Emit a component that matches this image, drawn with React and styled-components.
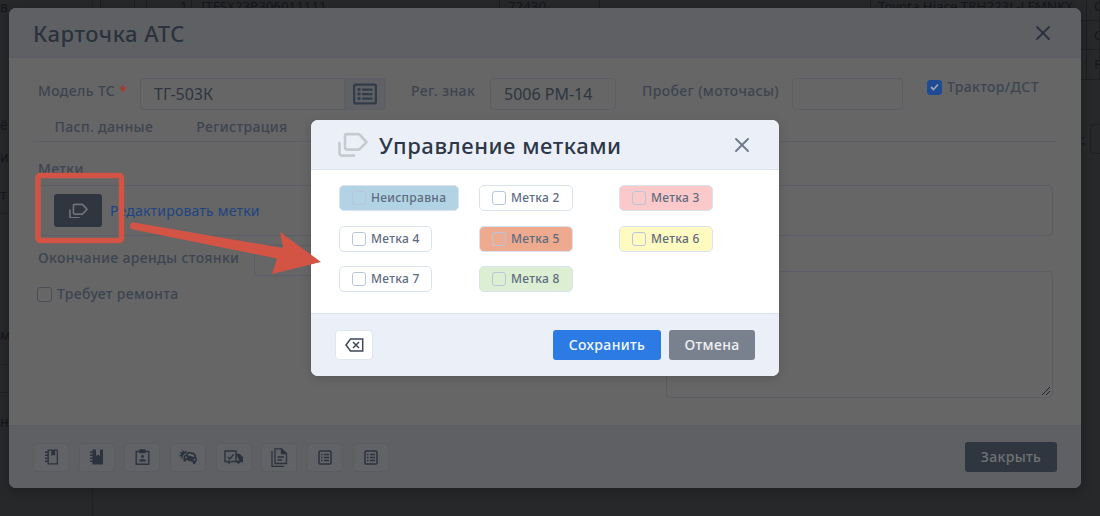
import React from 'react';
import styled, { createGlobalStyle } from 'styled-components';
import { FaCarCrash, FaRegListAlt } from 'react-icons/fa';

const GlobalStyle = createGlobalStyle`
  html, body { margin: 0; padding: 0; height: 100%; }
  body { background: #27282a; font-family: "Noto Sans", "Open Sans", sans-serif; overflow: hidden; }
  * { box-sizing: border-box; }
`;

const Page = styled.div`
  position: relative;
  width: 1100px;
  height: 516px;
  overflow: hidden;
  background: #27282a;
  display: flex;
`;

/* --- dimmed page behind the dialogs --- */
const Sidebar = styled.div`
  width: 93px;
  border-right: 1px solid #202123;
  display: flex;
  flex-direction: column;
  flex-shrink: 0;
`;

const SideRow = styled.div`
  height: ${p => p.$h}px;
  display: flex;
  align-items: center;
  color: #14161a;
  font-size: 14px;
  border-bottom: ${p => (p.$line ? '1px solid #202123' : 'none')};
`;

const Main = styled.div`
  flex: 1;
  min-width: 0;
`;

const TableRow = styled.div`
  display: grid;
  grid-template-columns: 8px 34px 12px 45px 308px 100px 271px 216px 1fr;
  height: ${p => p.$h}px;
  margin-top: ${p => p.$top || 0}px;
  border-bottom: 1px solid #1d1e20;
`;

const Cell = styled.div`
  border-right: 1px solid #1d1e20;
  padding-left: ${p => p.$pad || 0}px;
  color: #15161a;
  font-size: 13.3px;
  line-height: 29px;
  white-space: nowrap;
  overflow: hidden;
  text-align: ${p => p.$align || 'left'};
`;

const Pager = styled.div`
  display: flex;
  justify-content: flex-end;
  align-items: center;
  height: 76px;
  padding-top: 42px;
  color: #15161a;
  font-size: 14px;
`;

const PagerBox = styled.div`
  width: 30px;
  height: 30px;
  margin-left: 5px;
  margin-right: -20px;
  border: 1px solid #1f2022;
  border-radius: 4px;
`;

/* --- vehicle card --- */
const DialogLayer = styled.div`
  position: absolute;
  inset: 0;
  padding: 8px 19px 28px 9px;
  display: flex;
`;

const Dialog = styled.div`
  flex: 1;
  display: flex;
  flex-direction: column;
  background: #666666;
  border-radius: 7px;
  overflow: hidden;
  box-shadow: 0 3px 12px rgba(0, 0, 0, 0.25);
`;

const DialogHeader = styled.div`
  height: 50px;
  padding: 0 30px 0 24px;
  flex-shrink: 0;
  display: flex;
  align-items: center;
  justify-content: space-between;
  background: #5f6064;
  border-bottom: 1px solid #5b5d66;
  color: #2b323d;
`;

const DialogTitle = styled.div`
  font-size: 22px;
  font-weight: 500;
  letter-spacing: 0.025em;
  line-height: 50px;
`;

const DialogBody = styled.div`
  flex: 1;
  padding: 20px 24px 0;
`;

const FormRow = styled.div`
  display: flex;
  align-items: flex-start;
  padding-left: 5px;
`;

const FieldLabel = styled.div`
  width: ${p => p.$w}px;
  margin-left: ${p => p.$ml || 0}px;
  font-size: 14px;
  font-weight: 500;
  letter-spacing: 0.025em;
  line-height: 26px;
  color: #3d4450;
  white-space: nowrap;
  flex-shrink: 0;
`;

const Required = styled.span`
  color: #a8372d;
`;

const InputBox = styled.div`
  width: ${p => p.$w}px;
  height: ${p => p.$h || 32}px;
  margin-left: ${p => p.$ml || 0}px;
  padding-left: 13px;
  border: 1px solid #5b5d67;
  border-radius: ${p => (p.$attached ? '4px 0 0 4px' : '4px')};
  font-size: 16px;
  line-height: 31px;
  color: #2e3540;
  flex-shrink: 0;
`;

const Addon = styled.div`
  width: 41px;
  height: 32px;
  display: flex;
  align-items: center;
  justify-content: center;
  background: #5f6165;
  border: 1px solid #5b5d67;
  border-left: none;
  border-radius: 0 4px 4px 0;
  color: #333c49;
  font-size: 24px;
`;

const CheckWrap = styled.label`
  display: flex;
  align-items: center;
  gap: 5px;
  margin-left: ${p => p.$ml || 0}px;
  margin-top: ${p => p.$mt || 0}px;
  font-size: 14px;
  font-weight: 500;
  letter-spacing: 0.025em;
  line-height: 16px;
  color: #3d4450;
`;

const DimCheck = styled.span`
  width: 15px;
  height: 15px;
  border-radius: 3px;
  display: flex;
  align-items: center;
  justify-content: center;
  border: 1px solid ${p => (p.$on ? '#1f4b94' : '#4a4d55')};
  background: ${p => (p.$on ? '#1f4b94' : 'transparent')};
  flex-shrink: 0;
`;

const Tabs = styled.div`
  display: flex;
  height: 33px;
  margin-top: -1px;
  border-bottom: 1px solid #5b5d67;
`;

const Tab = styled.div`
  padding: 0 21.5px;
  font-size: 14px;
  font-weight: 500;
  letter-spacing: 0.025em;
  line-height: 36px;
  color: #3d4450;
`;

const SectionLabel = styled.div`
  margin: 19px 0 8px 5px;
  font-size: 14px;
  font-weight: 500;
  letter-spacing: 0.025em;
  line-height: 16px;
  color: #3d4450;
`;

const TagBox = styled.div`
  height: 51px;
  margin: 0 4px 0 5px;
  padding-left: 15px;
  display: flex;
  align-items: center;
  gap: 8px;
  border: 1px solid #5b5d65;
  border-radius: 5px;
`;

const TagButton = styled.div`
  width: 48px;
  height: 33px;
  display: flex;
  align-items: center;
  justify-content: center;
  background: #2f3640;
  border-radius: 3px;
  color: #6f7276;
`;

const TagLink = styled.span`
  font-size: 14px;
  letter-spacing: 0.014em;
  line-height: 16px;
  color: #1f4480;
`;

const Lower = styled.div`
  display: flex;
  justify-content: space-between;
  margin: 0 4px 0 5px;
`;

const LowerLeft = styled.div`
  padding-top: 9px;
`;

const DateRow = styled.div`
  display: flex;
`;

const DateLabel = styled.div`
  width: 216px;
  font-size: 14px;
  font-weight: 500;
  letter-spacing: 0.025em;
  line-height: 26px;
  color: #3d4450;
  white-space: nowrap;
`;

const TextArea = styled.div`
  position: relative;
  width: 387px;
  height: 127px;
  margin-top: 35px;
  border: 1px solid #5b5d65;
  border-radius: 4px;
`;

const Resizer = styled.svg`
  position: absolute;
  right: 1px;
  bottom: 1px;
`;

const DialogFooter = styled.div`
  height: 63px;
  flex-shrink: 0;
  padding: 0 24px;
  display: flex;
  align-items: center;
  justify-content: space-between;
  background: #5f6064;
  border-top: 1px solid #5c5e62;
`;

const IconBar = styled.div`
  display: flex;
  gap: 9.7px;
`;

const IconButton = styled.div`
  width: 36px;
  height: 29px;
  display: flex;
  align-items: center;
  justify-content: center;
  background: #626367;
  border: 1px solid #5a5c60;
  border-radius: 4px;
  color: #2c333e;
  font-size: 18px;
`;

const CloseButton = styled.div`
  width: 92px;
  height: 30px;
  text-align: center;
  background: #2f3640;
  border-radius: 3px;
  font-size: 14px;
  font-weight: 500;
  letter-spacing: 0.025em;
  line-height: 30px;
  color: #6f7377;
`;

/* --- labels modal --- */
const ModalLayer = styled.div`
  position: absolute;
  inset: 0;
  padding: 0 10px 20px 0;
  display: flex;
  align-items: center;
  justify-content: center;
`;

const Modal = styled.div`
  width: 468px;
  height: 256px;
  display: flex;
  flex-direction: column;
  background: #fff;
  border-radius: 7px;
  overflow: hidden;
  box-shadow: 0 2px 10px rgba(0, 0, 0, 0.15);
`;

const ModalHeader = styled.div`
  height: 50px;
  padding: 0 29px 0 27px;
  display: flex;
  align-items: center;
  background: #ebf0f8;
  border-bottom: 1px solid #dbe4ef;
  color: #2d3748;
`;

const HeaderIcon = styled.span`
  display: flex;
  color: #c6c9cf;
`;

const ModalTitle = styled.div`
  flex: 1;
  margin-left: 11px;
  font-size: 22px;
  font-weight: 500;
  letter-spacing: 0.025em;
  line-height: 50px;
`;

const TagGrid = styled.div`
  flex: 1;
  padding: 15px 0 0 28px;
  display: grid;
  grid-template-columns: repeat(3, 140px);
  grid-auto-rows: 26px;
  row-gap: 14.5px;
  justify-items: start;
`;

const Chip = styled.div`
  height: 26px;
  padding-left: 12px;
  width: ${p => p.$w}px;
  display: flex;
  align-items: center;
  gap: 5px;
  background: ${p => p.$bg || '#fff'};
  border: 1px solid #d9e2ef;
  border-radius: 5px;
  font-size: 12px;
  font-weight: 500;
  letter-spacing: 0.025em;
  line-height: 24px;
  color: #5f6b7e;
  white-space: nowrap;
`;

const ChipCheck = styled.span`
  width: 14px;
  height: 14px;
  border: 1px solid #b8c6db;
  border-radius: 3px;
  flex-shrink: 0;
`;

const ModalFooter = styled.div`
  height: 63px;
  padding: 0 24px;
  display: flex;
  align-items: center;
  gap: 8px;
  background: #ebf0f8;
  border-top: 1px solid #d8e1ec;
`;

const EraseButton = styled.div`
  width: 38px;
  height: 30px;
  margin-right: auto;
  display: flex;
  align-items: center;
  justify-content: center;
  background: #fff;
  border: 1px solid #dfe6f0;
  border-radius: 4px;
  color: #3d4756;
`;

const ActionButton = styled.div`
  width: ${p => p.$w}px;
  height: 30px;
  text-align: center;
  background: ${p => p.$bg};
  border-radius: 3px;
  font-size: 14px;
  font-weight: 500;
  letter-spacing: 0.025em;
  line-height: 30px;
  color: ${p => p.$fg};
`;

const ModalClose = styled.div`
  display: flex;
  color: #6f7a8c;
`;

const Annotation = styled.svg`
  position: absolute;
  left: 0;
  top: 0;
  pointer-events: none;
`;

const CrossIcon = () => (
  <svg width="16" height="16" viewBox="0 0 16 16" fill="none" stroke="currentColor" strokeWidth="1.9" strokeLinecap="round">
    <path d="M2 2l12 12M14 2L2 14" />
  </svg>
);

const TagsIcon = ({ size = 30 }) => (
  <svg width={size} height={size * 0.84} viewBox="0 0 30 25" fill="none" stroke="currentColor" strokeWidth="2.6" strokeLinejoin="round" strokeLinecap="round">
    <path d="M9 2h11.500a1.500 1.500 0 0 1 1.100.5L28.500 10l-6.900 7a1.500 1.500 0 0 1-1.100.5H9a2 2 0 0 1-2-2V4a2 2 0 0 1 2-2z" />
    <path d="M1.500 11v10a2.500 2.500 0 0 0 2.500 2.500H16" />
  </svg>
);

const NotebookIcon = () => (
  <svg width="15" height="16" viewBox="0 0 15 16" fill="currentColor">
    <path d="M3.500.500H14v15H3.500zM4.800 1.800v12.400h7.900V1.800h-1.600v5.200L9.200 5.700 7.300 7V1.800z" fillRule="evenodd" />
    <path d="M1 2.500h3.500V4H1zM1 5.500h3.500V7H1zM1 8.500h3.500V10H1zM1 11.500h3.500V13H1z" />
  </svg>
);

const NotebookSolidIcon = () => (
  <svg width="15" height="16" viewBox="0 0 15 16" fill="currentColor">
    <path d="M3.500.500H7v6.500l2-1.500 2 1.500V.500h3v15H3.500z" />
    <path d="M1 2.500h3.500V4H1zM1 5.500h3.500V7H1zM1 8.500h3.500V10H1zM1 11.500h3.500V13H1z" />
  </svg>
);

const ClipboardUserIcon = () => (
  <svg width="15" height="16" viewBox="0 0 15 16" fill="none" stroke="currentColor" strokeWidth="1.400">
    <path d="M4.500 2.500H1.200v12.800h12.600V2.500h-3.300" />
    <path d="M5 1h5v2.600H5z" fill="currentColor" />
    <circle cx="7.500" cy="7.500" r="1.400" fill="currentColor" stroke="none" />
    <path d="M4 12.500c.4-1.700 1.700-2.400 3.500-2.400s3.100.7 3.500 2.400z" fill="currentColor" stroke="none" />
  </svg>
);

const TruckCheckIcon = () => (
  <svg width="19" height="15" viewBox="0 0 19 15" fill="none" stroke="currentColor" strokeWidth="1.400">
    <path d="M3 11.500H1V1h11v10.500H7" />
    <path d="M12 4.500h3.500l2.800 3v4H16" fill="currentColor" />
    <path d="M12 11.500h1" />
    <path d="M3.800 7l2 2L9.500 4.500" strokeWidth="1.500" />
    <circle cx="5" cy="12" r="1.700" fill="currentColor" stroke="none" />
    <circle cx="14.500" cy="12" r="1.700" fill="currentColor" stroke="none" />
  </svg>
);

const FilesIcon = () => (
  <svg width="17" height="19" viewBox="0 0 17 19" fill="none" stroke="currentColor" strokeWidth="1.300">
    <path d="M1 3v15.300h12" />
    <path d="M4 .800h6.500L15.500 5.500v10H4z" />
    <path d="M10.500.800v4.700h5" fill="currentColor" />
    <path d="M6.500 9h6.500M6.500 12h4.500" />
  </svg>
);

const ListIcon = () => (
  <svg width="14" height="15" viewBox="0 0 14 15" fill="none" stroke="currentColor" strokeWidth="1.500">
    <rect x="1" y="1" width="12" height="13" rx="1" />
    <path d="M3 4.500h1.500M3 7.500h1.500M3 10.500h1.500M6 4.500h5M6 7.500h5M6 10.500h5" strokeWidth="1.300" />
  </svg>
);

const BackspaceIcon = () => (
  <svg width="19" height="14" viewBox="0 0 19 14" fill="none" stroke="currentColor" strokeWidth="1.500">
    <path d="M17.700 1H5.500L1 7l4.500 6h12.200z" />
    <path d="M8 4l6 6M14 4l-6 6" />
  </svg>
);

const chips = [
  { name: 'Неисправна', w: 120, bg: '#b2d3e4' },
  { name: 'Метка 2', w: 94 },
  { name: 'Метка 3', w: 94, bg: '#fbc9c9' },
  { name: 'Метка 4', w: 93 },
  { name: 'Метка 5', w: 94, bg: '#eeaa8e' },
  { name: 'Метка 6', w: 94, bg: '#fefac0' },
  { name: 'Метка 7', w: 93 },
  { name: 'Метка 8', w: 94, bg: '#dcefd2' },
];

const sideRows = [
  { h: 12, text: 'в' },
  { h: 102 },
  { h: 20, text: 'ё' },
  { h: 12 },
  { h: 20, text: 'и' },
  { h: 18 },
  { h: 20, text: 'т' },
  { h: 10, line: true },
  { h: 110 },
  { h: 20, text: 'м' },
  { h: 21, line: true },
  { h: 28, line: true },
  { h: 18 },
  { h: 20, text: 'н' },
];

export default function App() {
  return (
    <Page>
      <GlobalStyle />
      <Sidebar>
        {sideRows.map((r, i) => (
          <SideRow key={i} $h={r.h} $line={r.line}>{r.text}</SideRow>
        ))}
      </Sidebar>
      <Main>
        <TableRow $h={29} $top={-8}>
          <Cell /><Cell /><Cell /><Cell $align="right">1&nbsp;</Cell>
          <Cell $pad={9}>ITFSX23P306011111</Cell>
          <Cell $pad={8}>72430</Cell>
          <Cell />
          <Cell $pad={7}>Toyota Hiace TRH223L-LEMNKX</Cell>
          <Cell $pad={7}>C</Cell>
        </TableRow>
        <TableRow $h={29}>
          <Cell /><Cell /><Cell /><Cell /><Cell /><Cell /><Cell /><Cell />
          <Cell $pad={7}>C</Cell>
        </TableRow>
        <TableRow $h={30}>
          <Cell /><Cell /><Cell /><Cell /><Cell /><Cell /><Cell /><Cell />
          <Cell $pad={7}>F</Cell>
        </TableRow>
        <Pager>:<PagerBox /></Pager>
      </Main>

      <DialogLayer>
        <Dialog>
          <DialogHeader>
            <DialogTitle>Карточка АТС</DialogTitle>
            <CrossIcon />
          </DialogHeader>
          <DialogBody>
            <FormRow>
              <FieldLabel $w={102}>Модель ТС <Required>*</Required></FieldLabel>
              <InputBox $w={205} $attached>ТГ-503К</InputBox>
              <Addon><FaRegListAlt /></Addon>
              <FieldLabel $w={79} $ml={25}>Рег. знак</FieldLabel>
              <InputBox $w={126}>5006 РМ-14</InputBox>
              <FieldLabel $w={150} $ml={26}>Пробег (моточасы)</FieldLabel>
              <InputBox $w={111} />
              <CheckWrap $ml={24} $mt={1}>
                <DimCheck $on>
                  <svg width="9" height="8" viewBox="0 0 9 8" fill="none" stroke="#9aa3ad" strokeWidth="1.800"><path d="M1 4l2.500 2.500L8 1.500" /></svg>
                </DimCheck>
                Трактор/ДСТ
              </CheckWrap>
            </FormRow>
            <Tabs>
              <Tab>Пасп. данные</Tab>
              <Tab>Регистрация</Tab>
            </Tabs>
            <SectionLabel>Метки</SectionLabel>
            <TagBox>
              <TagButton><TagsIcon size={19} /></TagButton>
              <TagLink>Редактировать метки</TagLink>
            </TagBox>
            <Lower>
              <LowerLeft>
                <DateRow>
                  <DateLabel>Окончание аренды стоянки</DateLabel>
                  <InputBox $w={120} $h={31} />
                </DateRow>
                <CheckWrap $mt={10} $ml={-1}>
                  <DimCheck />
                  Требует ремонта
                </CheckWrap>
              </LowerLeft>
              <TextArea>
                <Resizer width="10" height="10" viewBox="0 0 10 10" stroke="#22252b" strokeWidth="1">
                  <path d="M1 9l8-8M5 9l4-4" />
                </Resizer>
              </TextArea>
            </Lower>
          </DialogBody>
          <DialogFooter>
            <IconBar>
              <IconButton><NotebookIcon /></IconButton>
              <IconButton><NotebookSolidIcon /></IconButton>
              <IconButton><ClipboardUserIcon /></IconButton>
              <IconButton><FaCarCrash /></IconButton>
              <IconButton><TruckCheckIcon /></IconButton>
              <IconButton><FilesIcon /></IconButton>
              <IconButton><ListIcon /></IconButton>
              <IconButton><ListIcon /></IconButton>
            </IconBar>
            <CloseButton>Закрыть</CloseButton>
          </DialogFooter>
        </Dialog>
      </DialogLayer>

      <ModalLayer>
        <Modal>
          <ModalHeader>
            <HeaderIcon><TagsIcon /></HeaderIcon>
            <ModalTitle>Управление метками</ModalTitle>
            <ModalClose><CrossIcon /></ModalClose>
          </ModalHeader>
          <TagGrid>
            {chips.map(c => (
              <Chip key={c.name} $w={c.w} $bg={c.bg}>
                <ChipCheck />
                {c.name}
              </Chip>
            ))}
          </TagGrid>
          <ModalFooter>
            <EraseButton><BackspaceIcon /></EraseButton>
            <ActionButton $w={108} $bg="#2c7be5" $fg="#f4f8fe">Сохранить</ActionButton>
            <ActionButton $w={86} $bg="#79818f" $fg="#eef0f3">Отмена</ActionButton>
          </ModalFooter>
        </Modal>
      </ModalLayer>

      <Annotation width="1100" height="516" viewBox="0 0 1100 516">
        <rect x="38" y="175.500" width="83.500" height="65" rx="2" fill="none" stroke="#d35345" strokeWidth="5.500" />
        <path d="M134 222.500L283 248 280 232 321 262 272 274 277 258.500 133 229.500a3.400 3.400 0 0 1 1-7z" fill="#d35345" />
      </Annotation>
    </Page>
  );
}
